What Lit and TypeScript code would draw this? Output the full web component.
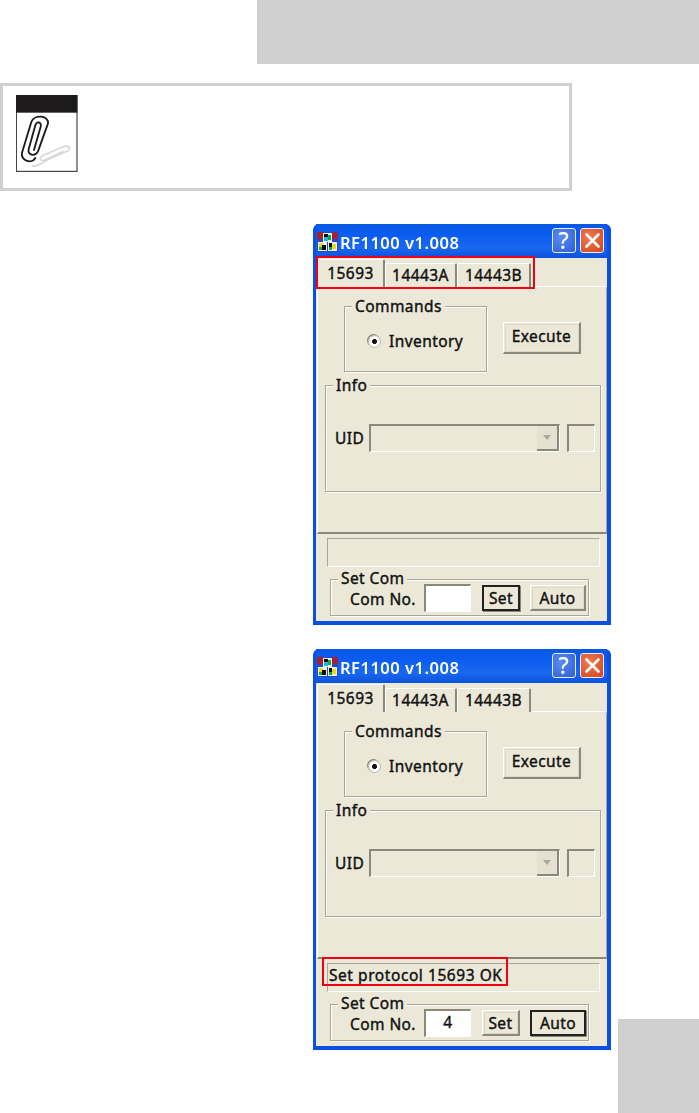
import { LitElement, html, css, svg } from "lit";
import { customElement, property } from "lit/decorators.js";

const mosaic = svg`<svg class="logo" viewBox="0 0 21 20" width="21" height="20" aria-hidden="true">
  <rect x="0" y="0" width="21" height="20" fill="#2a48c0"/>
  <rect x="0" y="0" width="6" height="7" fill="#a82020"/><rect x="15" y="0" width="6" height="7" fill="#a02040"/>
  <rect x="6" y="1" width="9" height="9" fill="#e8f0e8"/><rect x="7" y="2" width="4" height="3" fill="#0a0a14"/><rect x="11" y="3" width="3" height="5" fill="#10a848"/><rect x="7" y="5" width="4" height="4" fill="#18b8d8"/>
  <rect x="1" y="10" width="9" height="9" fill="#e8f0e8"/><rect x="2" y="11" width="4" height="4" fill="#f0d818"/><rect x="5" y="13" width="4" height="5" fill="#0a0a14"/><rect x="2" y="15" width="3" height="3" fill="#18b040"/>
  <rect x="11" y="10" width="9" height="9" fill="#e8f0e8"/><rect x="12" y="11" width="3" height="4" fill="#0a0a14"/><rect x="15" y="12" width="4" height="5" fill="#f0d818"/><rect x="12" y="15" width="3" height="3" fill="#10a848"/>
</svg>`;

@customElement("rf-window")
class RfWindow extends LitElement {
  @property() status = "";
  @property() com = "";
  @property() focus = "set";

  static styles = css`
    :host { display: block; width: 298px; height: 401px; }
    .win { height: 100%; box-sizing: border-box; display: flex; flex-direction: column; background: #0a50e0; border-radius: 6px 6px 0 0; padding: 0 4px 4px 3px; filter: blur(0.45px); font-family: "Noto Sans", sans-serif; font-size: 15.5px; -webkit-text-stroke: 0.4px #111; color: #111; letter-spacing: 0.42px; }
    .title { height: 34px; flex: none; display: flex; align-items: center; gap: 2px; padding: 3px 3px 0 1px; box-sizing: border-box; background: linear-gradient(#0a58e4, #0a5cf0 30%, #1a68f0 70%, #0c52dc); color: #fff; -webkit-text-stroke: 0; font-size: 16.5px; font-weight: 600; letter-spacing: 0.5px; }
    .logo { flex: none; margin-top: -2px; }
    .name { flex: 1; white-space: nowrap; }
    .cap { flex: none; width: 24px; height: 25px; box-sizing: border-box; border: 1px solid #e8eefc; border-radius: 3px; display: grid; place-items: center; color: #fff; margin-left: 2px; margin-top: -4px; }
    .help { background: radial-gradient(circle at 35% 35%, #5a8cf0, #2f5cd8); font-size: 23px; line-height: 1; font-weight: 500; }
    .close { background: radial-gradient(circle at 35% 35%, #ec7a50, #d8431c); }
    .client { flex: 1; background: #ebe8d8; display: flex; flex-direction: column; min-height: 0; }
    .pane-wrap { height: 274px; flex: none; display: flex; flex-direction: column; padding: 2px 0 0 1px; }
    .tabs { display: flex; align-items: flex-end; height: 27px; flex: none; position: relative; z-index: 1; margin-bottom: -1px; }
    .tab { box-sizing: border-box; height: 24px; display: grid; place-items: center; border: 1px solid #fff; border-right: 2px solid #8a8878; border-bottom: 0; border-radius: 2px 2px 0 0; background: #ebe8d8; white-space: nowrap; padding-bottom: 1px; }
    .tab.sel { height: 28px; position: relative; padding-bottom: 2px; }
    .pane { flex: 1; border: 1px solid #fff; border-right: 1px solid #a8a798; border-bottom: 2px solid #8a8878; border-radius: 0 4px 0 0; background: #ebe8d8; display: flex; flex-direction: column; padding: 19px 5px 0 7px; }
    .top { display: flex; align-items: center; }
    .group { box-sizing: border-box; border: 1px solid #a8a798; box-shadow: 1px 1px 0 #fff, inset 1px 1px 0 #fff; position: relative; }
    .legend { position: absolute; top: -8px; left: 7px; line-height: 14px; padding: 0 3px; background: #ebe8d8; white-space: nowrap; }
    .cmds { width: 143px; height: 66px; margin-left: 19px; display: flex; align-items: center; gap: 8px; padding: 4px 0 0 23px; }
    .radio { width: 13px; height: 13px; box-sizing: border-box; border-radius: 50%; background: radial-gradient(circle, #111 0 2.2px, #fff 2.6px); border: 1px solid #b8b6a8; box-shadow: -1px -1px 0 #8a8878; flex: none; -webkit-text-stroke: 0; }
    .btn { box-sizing: border-box; display: grid; place-items: center; background: #ebe8d8; border: 1px solid #fff; border-right: 2px solid #8a8878; border-bottom: 2px solid #8a8878; outline: 1px solid #ddd9c8; outline-offset: -3px; }
    .btn.focus { border: 2px solid #222; outline: none; box-shadow: 1px 1px 0 #8a8878; }
    .exec { width: 78px; height: 32px; margin-left: 16px; margin-top: -3px; padding-bottom: 2px; }
    .info { height: 107px; margin-top: 13px; display: flex; align-items: center; padding: 0 4px 2px 9px; }
    .info .uid { width: 34px; }
    .sunken { box-sizing: border-box; border: 2px solid #8a8878; border-right: 1px solid #fff; border-bottom: 1px solid #fff; }
    .combo { width: 191px; height: 28px; display: flex; justify-content: flex-end; align-items: stretch; }
    .arrow { width: 20px; display: grid; place-items: center; border-right: 2px solid #8a8878; border-bottom: 2px solid #8a8878; background: #e4e1d0; }
    .arrow i { width: 0; height: 0; border: 4.5px solid transparent; border-top: 5px solid #aaa898; border-bottom: 0; }
    .box { width: 28px; height: 28px; margin-left: 7px; }
    .status { box-sizing: border-box; height: 29px; margin: 4px 7px 0 11px; border: 1px solid #a8a798; border-right-color: #fff; border-bottom-color: #fff; display: flex; align-items: center; padding: 0 0 6px 1px; white-space: nowrap; letter-spacing: 0.56px; }
    .setcom { height: 37px; margin: 12px 18px 0 14px; display: flex; align-items: center; padding-left: 19px; }
    .setcom .legend { top: -9px; }
    .setcom .lab { flex: none; width: 74px; white-space: nowrap; line-height: 18px; margin-top: 3px; }
    .input { box-sizing: border-box; flex: none; width: 47px; height: 28px; background: #fff; display: grid; place-items: center; padding-bottom: 3px; }
    .set { flex: none; width: 38px; height: 26px; margin-left: 11px; margin-top: 1px; }
    .auto { flex: none; width: 56px; height: 26px; margin-left: 10px; margin-top: 1px; }
  `;

  render() {
    return html`<div class="win">
      <div class="title">${mosaic}<span class="name">RF1100 v1.008</span>
        <span class="cap help">?</span>
        <span class="cap close"><svg width="17" height="17" viewBox="0 0 17 17"><path d="M2.5 2.5 14.5 14.5M14.5 2.5 2.5 14.5" stroke="#fff" stroke-width="2.6" stroke-linecap="round"/></svg></span>
      </div>
      <div class="client">
        <div class="pane-wrap">
          <div class="tabs">
            <div class="tab sel" style="width:68px">15693</div>
            <div class="tab" style="width:72px">14443A</div>
            <div class="tab" style="width:74px">14443B</div>
          </div>
          <div class="pane">
            <div class="top">
              <div class="group cmds"><span class="legend">Commands</span><span class="radio"></span><span>Inventory</span></div>
              <div class="btn exec">Execute</div>
            </div>
            <div class="group info"><span class="legend">Info</span>
              <span class="uid">UID</span>
              <div class="sunken combo"><span class="arrow"><i></i></span></div>
              <div class="sunken box"></div>
            </div>
          </div>
        </div>
        <div class="status">${this.status}</div>
        <div class="group setcom"><span class="legend">Set Com</span>
          <span class="lab">Com No.</span>
          <div class="sunken input">${this.com}</div>
          <div class="btn set ${this.focus === "set" ? "focus" : ""}">Set</div>
          <div class="btn auto ${this.focus === "auto" ? "focus" : ""}">Auto</div>
        </div>
      </div>
    </div>`;
  }
}

@customElement("app-root")
class AppRoot extends LitElement {
  static styles = css`
    :host { display: flex; flex-direction: column; width: 699px; height: 1113px; background: #fff; overflow: hidden; }
    .head { flex: none; height: 64px; margin-left: 257px; background: #cfcfcf; }
    .note { flex: none; box-sizing: border-box; width: 572px; height: 108px; margin-top: 19px; border: 3px solid #d0d0d0; padding: 9px 0 0 13px; }
    .note svg { display: block; }
    .body { flex: 1; display: flex; min-height: 0; }
    .col { width: 298px; margin-left: 313px; padding-top: 33px; display: flex; flex-direction: column; gap: 24px; }
    .col > div { position: relative; }
    .mark { position: absolute; box-sizing: border-box; border: 2px solid #f00010; }
    .m1 { left: 3px; top: 32px; width: 219px; height: 33px; }
    .m2 { left: 9px; top: 308px; width: 186px; height: 29px; }
    .corner { flex: none; width: 81px; height: 94px; margin-left: auto; align-self: flex-end; background: #cfcfcf; }
  `;
  render() {
    return html`
      <div class="head"></div>
      <div class="note">
        <svg width="62" height="77" viewBox="48 45 186 231" aria-hidden="true">
          <rect x="49" y="46" width="182" height="228" fill="#fff" stroke="#222" stroke-width="3"/>
          <rect x="48" y="45" width="184" height="53" fill="#1c1a1a"/>
          <path d="M95 258C110 262 125 250 145 238L205 212C214 205 205 195 190 200L130 226C115 234 120 246 135 240L190 214" fill="none" stroke="#d8d8d8" stroke-width="5"/>
          <path d="M102 210 122 140C126 126 110 122 106 136L86 208C82 224 104 232 114 214L144 130C148 108 104 100 94 126L66 218C62 244 96 252 106 234" fill="none" stroke="#1c1a1a" stroke-width="5.5" stroke-linecap="round" stroke-linejoin="round"/>
        </svg>
      </div>
      <div class="body">
        <div class="col">
          <div><rf-window></rf-window><span class="mark m1"></span></div>
          <div><rf-window status="Set protocol 15693 OK" com="4" focus="auto"></rf-window><span class="mark m2"></span></div>
        </div>
        <div class="corner"></div>
      </div>`;
  }
}
